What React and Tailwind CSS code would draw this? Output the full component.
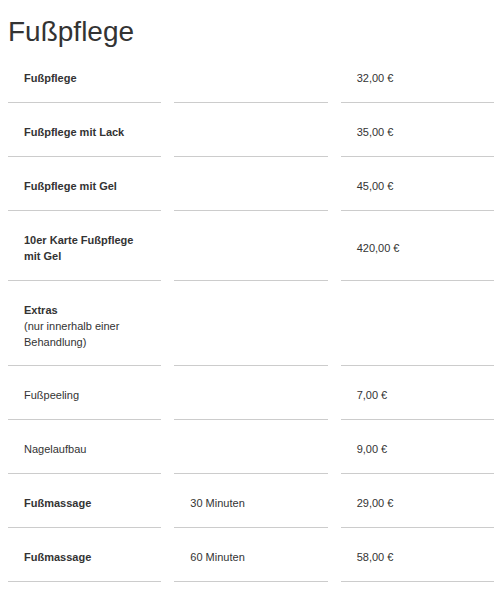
import React from 'react'

const rows = [
  { name: 'Fußpflege', bold: true, time: '', price: '32,00 €' },
  { name: 'Fußpflege mit Lack', bold: true, time: '', price: '35,00 €' },
  { name: 'Fußpflege mit Gel', bold: true, time: '', price: '45,00 €' },
  { name: ['10er Karte Fußpflege', 'mit Gel'], bold: true, time: '', price: '420,00 €' },
  { extras: true, time: '', price: '' },
  { name: 'Fußpeeling', bold: false, time: '', price: '7,00 €' },
  { name: 'Nagelaufbau', bold: false, time: '', price: '9,00 €' },
  { name: 'Fußmassage', bold: true, time: '30 Minuten', price: '29,00 €' },
  { name: 'Fußmassage', bold: true, time: '60 Minuten', price: '58,00 €' }
]

const Cell = ({ children, tight }) => (
  <div className={`flex items-center border-b border-[#cccccc] px-4 pt-[21px] ${tight ? 'pb-[15px]' : 'pb-4'}`}>
    <div>{children}</div>
  </div>
)

const App = () => {
  return (
    <div className="min-h-screen bg-white text-[#333333]" style={{ fontFamily: '"Liberation Sans", Arial, sans-serif' }}>
      <h1 className="pl-2 pt-[15px] text-[28px] leading-[34px] font-normal text-[#333333]">Fußpflege</h1>
      <div className="ml-2 w-[486px] text-[11px] leading-4">
        {rows.map((row, i) => (
          <div key={i} className="grid grid-cols-3 gap-x-[13px]">
            <Cell tight={row.extras}>
              {row.extras ? (
                <>
                  <div className="font-bold">Extras</div>
                  <div>(nur innerhalb einer</div>
                  <div>Behandlung)</div>
                </>
              ) : Array.isArray(row.name) ? (
                row.name.map((n) => (
                  <div key={n} className="font-bold">{n}</div>
                ))
              ) : (
                <span className={row.bold ? 'font-bold' : ''}>{row.name}</span>
              )}
            </Cell>
            <Cell tight={row.extras}>{row.time}</Cell>
            <Cell tight={row.extras}>{row.price}</Cell>
          </div>
        ))}
      </div>
    </div>
  )
}

export default App
